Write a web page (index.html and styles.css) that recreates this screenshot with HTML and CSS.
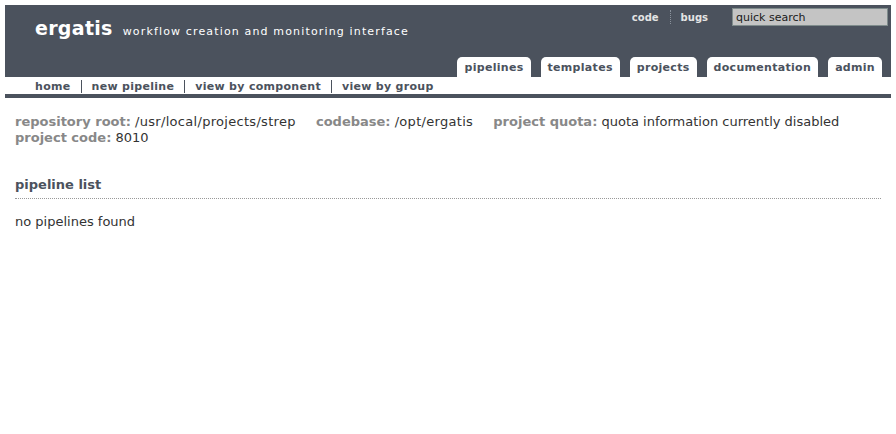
FILE: index.html
```html
<!DOCTYPE html>
<html>
<head>
<meta charset="utf-8">
<title>ergatis</title>
<link rel="stylesheet" href="styles.css">
</head>
<body>
<div class="header">
  <div class="header-top">
    <div class="brand">
      <span class="brand-name">ergatis</span>
      <span class="brand-sub">workflow creation and monitoring interface</span>
    </div>
    <div class="tools">
      <a class="tool-link" href="#">code</a>
      <span class="tool-sep"></span>
      <a class="tool-link" href="#">bugs</a>
      <input class="search" type="text" value="quick search">
    </div>
  </div>
  <div class="tabs">
    <a class="tab active" href="#">pipelines</a>
    <a class="tab" href="#">templates</a>
    <a class="tab" href="#">projects</a>
    <a class="tab" href="#">documentation</a>
    <a class="tab" href="#">admin</a>
  </div>
</div>
<div class="subnav">
  <a class="subnav-item" href="#">home</a>
  <a class="subnav-item" href="#">new pipeline</a>
  <a class="subnav-item" href="#">view by component</a>
  <a class="subnav-item" href="#">view by group</a>
</div>
<div class="content">
  <div class="info">
    <span class="info-item"><span class="label">repository root:</span> <span class="path">/usr/local/projects/strep</span></span>
    <span class="info-item"><span class="label">codebase:</span> <span class="path">/opt/ergatis</span></span>
    <span class="info-item"><span class="label">project quota:</span> quota information currently disabled</span>
    <span class="info-item"><span class="label">project code:</span> 8010</span>
  </div>
  <h2 class="section-title">pipeline list</h2>
  <p class="empty">no pipelines found</p>
</div>
</body>
</html>
```

FILE: styles.css
```css
html, body {
  background: #ffffff;
}
body {
  margin: 5px;
  font-family: "DejaVu Sans", Verdana, sans-serif;
  color: #333333;
}
a {
  text-decoration: none;
}
.header {
  background: #4b525d;
  height: 72px;
  display: flex;
  flex-direction: column;
  justify-content: space-between;
}
.header-top {
  display: flex;
  justify-content: space-between;
  align-items: flex-start;
}
.brand {
  padding: 12px 0 0 30px;
  color: #ffffff;
  display: flex;
  align-items: baseline;
}
.brand-name {
  font-size: 19px;
  font-weight: bold;
  letter-spacing: 0.3px;
}
.brand-sub {
  font-size: 11px;
  letter-spacing: 1.15px;
  margin-left: 10px;
}
.tools {
  display: flex;
  align-items: center;
  padding: 3px 3px 0 0;
}
.tool-link {
  font-size: 10px;
  font-weight: bold;
  color: #e4e4e4;
}
.tool-sep {
  width: 0;
  height: 14px;
  border-left: 1px dotted #8a929c;
  margin: 0 10px 0 11px;
}
.search {
  margin-left: 24px;
  width: 156px;
  height: 18px;
  box-sizing: border-box;
  background: #c4c4c4;
  border: 1px solid #7f8c8c;
  font-family: "DejaVu Sans", Verdana, sans-serif;
  font-size: 11px;
  color: #1a1a1a;
  padding: 0 3px;
}
.tabs {
  display: flex;
  justify-content: flex-end;
  gap: 10px;
  padding-right: 9px;
}
.tab {
  background: #ffffff;
  border-radius: 5px 5px 0 0;
  padding: 3px 7px 2px;
  height: 15px;
  font-size: 11px;
  font-weight: bold;
  letter-spacing: 0.3px;
  color: #4b525d;
  line-height: 15px;
}
.subnav {
  display: flex;
  align-items: center;
  height: 16px;
  padding: 1px 0 0 30px;
  border-bottom: 4px solid #4b525d;
}
.subnav-item {
  font-size: 11px;
  font-weight: bold;
  letter-spacing: 0.3px;
  color: #4b525d;
  padding: 0 10px;
  border-left: 1px solid #4b525d;
  line-height: 13px;
}
.subnav-item:first-child {
  border-left: none;
  padding-left: 0;
}
.content {
  padding: 16px 10px 0 10px;
}
.info {
  font-size: 13px;
  line-height: 16px;
}
.info-item {
  margin-right: 16px;
}
.label {
  font-weight: bold;
  color: #888888;
}
.path {
  letter-spacing: 0.3px;
}
.section-title {
  font-size: 13px;
  font-weight: bold;
  color: #4b525d;
  margin: 31px 0 0 0;
  padding-bottom: 6px;
  border-bottom: 1px dotted #999999;
}
.empty {
  font-size: 13px;
  margin: 15px 0 0 0;
}
```
